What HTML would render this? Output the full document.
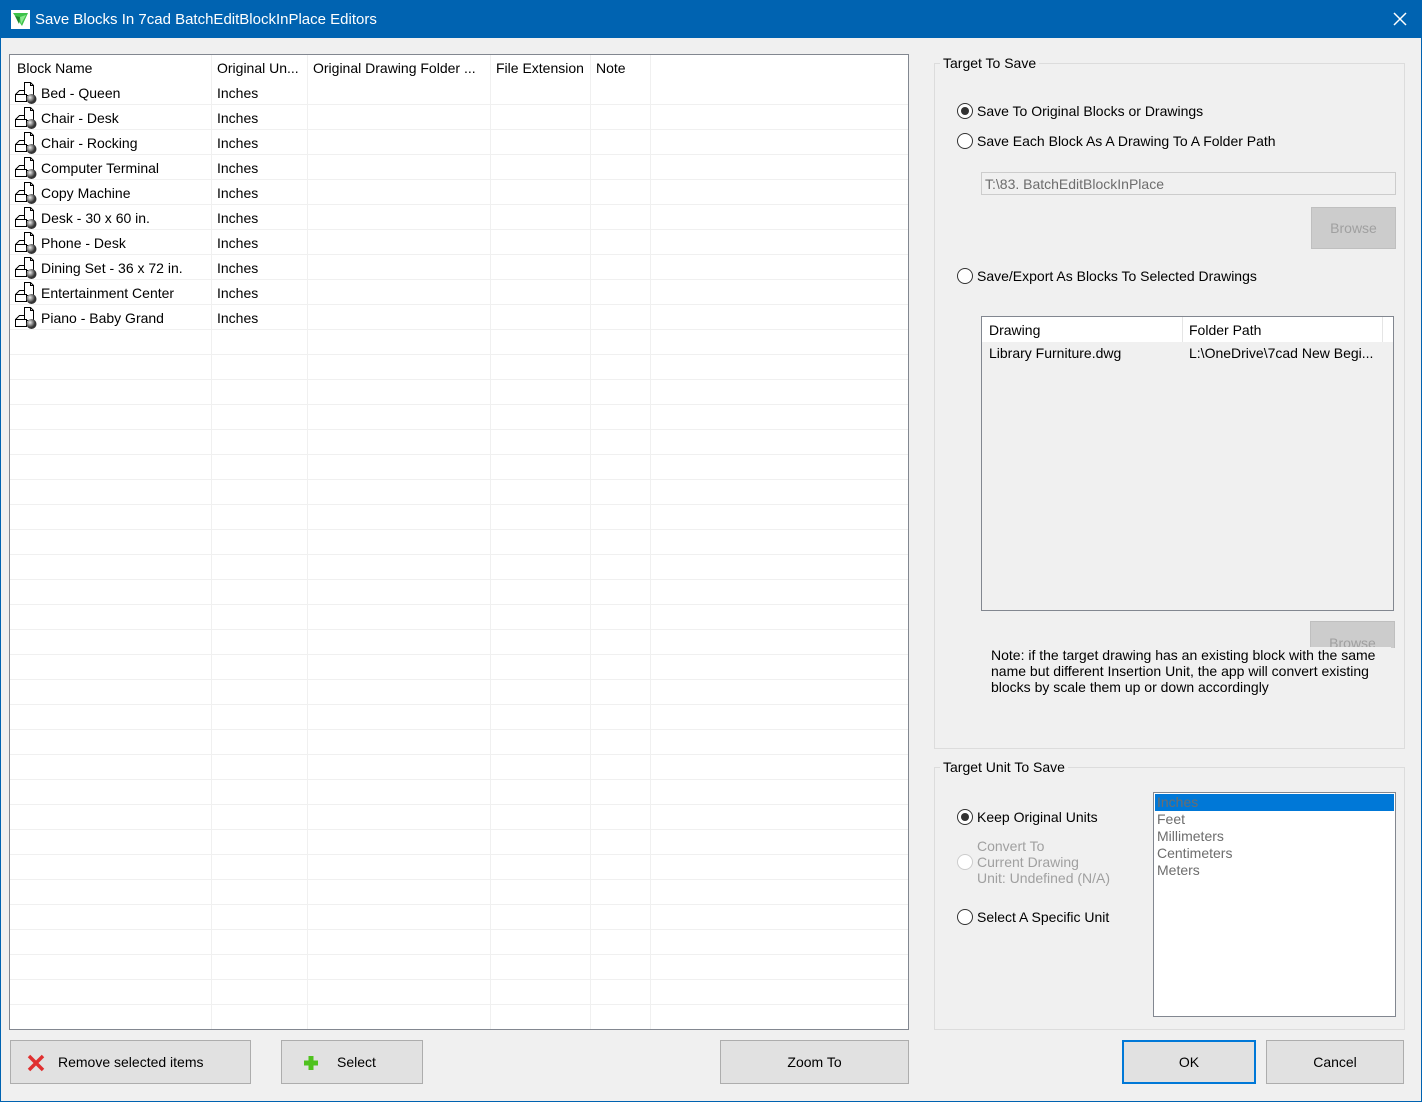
<!DOCTYPE html>
<html><head><meta charset="utf-8"><style>
*{margin:0;padding:0;box-sizing:border-box}
body{width:1422px;height:1102px;background:#f0f0f0;font-family:"Liberation Sans",sans-serif;font-size:14px;color:#000;position:relative;overflow:hidden}
.a{position:absolute;white-space:nowrap}
.win{position:absolute;left:0;top:0;width:1422px;height:1102px;border:1px solid #0063b1;border-top:none}
.title{position:absolute;left:0;top:0;width:1422px;height:38px;background:#0063b1;color:#fff;font-size:15px}
.grid{position:absolute;left:9px;top:54px;width:900px;height:976px;border:1px solid #828790;background:#fff;overflow:hidden}
.rows{position:absolute;left:0;top:25px;width:898px;height:950px;background:repeating-linear-gradient(to bottom,transparent 0,transparent 24px,#f0f0f0 24px,#f0f0f0 25px)}
.vl{position:absolute;top:0;width:1px;height:976px;background:#f0f0f0}
.btn{position:absolute;background:#e1e1e1;border:1px solid #adadad;text-align:center}
.grp{position:absolute;border:1px solid #dcdcdc}
.gl{position:absolute;background:#f0f0f0;padding:0 3px}
.rad{position:absolute;width:16px;height:16px;border:1px solid #333;border-radius:50%;background:#fff}
.rad.on::after{content:"";position:absolute;left:3px;top:3px;width:8px;height:8px;border-radius:50%;background:#333}
.dis{color:#a0a0a0}
.r{position:relative;height:25px}
</style></head><body>
<div class="win"></div>
<div class="title">
<svg class="a" style="left:11px;top:10px" width="19" height="19" viewBox="0 0 19 19"><rect width="19" height="19" fill="#fff"/><path d="M2 3 L17 3 L11 16 Z" fill="#3ec24a"/><path d="M4 6 L9 7 L8 14 Z" fill="#1e8a2e"/><path d="M9 7 L15 5 L10 14Z" fill="#8be88f"/></svg>
<span class="a" style="left:35px;top:11px">Save Blocks In 7cad BatchEditBlockInPlace Editors</span>
<svg class="a" style="left:1393px;top:12px" width="14" height="14"><path d="M1 1L13 13M13 1L1 13" stroke="#fff" stroke-width="1.5"/></svg>
</div>

<svg width="0" height="0" style="position:absolute"><defs><radialGradient id="g" cx="35%" cy="35%"><stop offset="0" stop-color="#eee"/><stop offset="1" stop-color="#333"/></radialGradient>
<symbol id="ic" viewBox="0 0 24 24"><path d="M10.5 1.5h6l3 3v10h-9z M16.5 1.5v3h3" fill="#fff" stroke="#000"/><rect x="1.5" y="13.5" width="11" height="7" fill="#fff" stroke="#000"/><path d="M1.5 13.5l4-4h5" fill="none" stroke="#000"/><circle cx="17.5" cy="18" r="5" fill="url(#g)"/></symbol></defs></svg>

<div class="grid">
<div class="rows"></div>
<div class="vl" style="left:201px"></div><div class="vl" style="left:297px"></div><div class="vl" style="left:480px"></div><div class="vl" style="left:580px"></div><div class="vl" style="left:640px"></div>
<span class="a" style="left:7px;top:5px">Block Name</span>
<span class="a" style="left:207px;top:5px">Original Un...</span>
<span class="a" style="left:303px;top:5px">Original Drawing Folder ...</span>
<span class="a" style="left:486px;top:5px">File Extension</span>
<span class="a" style="left:586px;top:5px">Note</span>
</div>

<div class="a" style="left:14px;top:81px;line-height:25px">
<div class="r"><svg class="a" style="left:0;top:0" width="24" height="24"><use href="#ic"/></svg><span class="a" style="left:27px">Bed - Queen</span><span class="a" style="left:203px">Inches</span></div>
<div class="r"><svg class="a" style="left:0;top:0" width="24" height="24"><use href="#ic"/></svg><span class="a" style="left:27px">Chair - Desk</span><span class="a" style="left:203px">Inches</span></div>
<div class="r"><svg class="a" style="left:0;top:0" width="24" height="24"><use href="#ic"/></svg><span class="a" style="left:27px">Chair - Rocking</span><span class="a" style="left:203px">Inches</span></div>
<div class="r"><svg class="a" style="left:0;top:0" width="24" height="24"><use href="#ic"/></svg><span class="a" style="left:27px">Computer Terminal</span><span class="a" style="left:203px">Inches</span></div>
<div class="r"><svg class="a" style="left:0;top:0" width="24" height="24"><use href="#ic"/></svg><span class="a" style="left:27px">Copy Machine</span><span class="a" style="left:203px">Inches</span></div>
<div class="r"><svg class="a" style="left:0;top:0" width="24" height="24"><use href="#ic"/></svg><span class="a" style="left:27px">Desk - 30 x 60 in.</span><span class="a" style="left:203px">Inches</span></div>
<div class="r"><svg class="a" style="left:0;top:0" width="24" height="24"><use href="#ic"/></svg><span class="a" style="left:27px">Phone - Desk</span><span class="a" style="left:203px">Inches</span></div>
<div class="r"><svg class="a" style="left:0;top:0" width="24" height="24"><use href="#ic"/></svg><span class="a" style="left:27px">Dining Set - 36 x 72 in.</span><span class="a" style="left:203px">Inches</span></div>
<div class="r"><svg class="a" style="left:0;top:0" width="24" height="24"><use href="#ic"/></svg><span class="a" style="left:27px">Entertainment Center</span><span class="a" style="left:203px">Inches</span></div>
<div class="r"><svg class="a" style="left:0;top:0" width="24" height="24"><use href="#ic"/></svg><span class="a" style="left:27px">Piano - Baby Grand</span><span class="a" style="left:203px">Inches</span></div>
</div>

<div class="btn" style="left:10px;top:1040px;width:241px;height:44px"><svg class="a" style="left:16px;top:13px" width="18" height="18"><path d="M2 2L16 16M16 2L2 16" stroke="#e03030" stroke-width="3.5"/></svg><span class="a" style="left:47px;top:13px">Remove selected items</span></div>
<div class="btn" style="left:281px;top:1040px;width:142px;height:44px"><svg class="a" style="left:20px;top:13px" width="18" height="18"><path d="M9 2V16M2 9H16" stroke="#4fc21e" stroke-width="5"/></svg><span class="a" style="left:55px;top:13px">Select</span></div>
<div class="btn" style="left:720px;top:1040px;width:189px;height:44px;line-height:42px">Zoom To</div>
<div class="btn" style="left:1122px;top:1040px;width:134px;height:44px;line-height:40px;border:2px solid #0078d7">OK</div>
<div class="btn" style="left:1266px;top:1040px;width:138px;height:44px;line-height:42px">Cancel</div>

<div class="grp" style="left:934px;top:63px;width:471px;height:686px"></div>
<span class="gl a" style="left:940px;top:55px">Target To Save</span>
<div class="rad on" style="left:957px;top:103px"></div><span class="a" style="left:977px;top:103px">Save To Original Blocks or Drawings</span>
<div class="rad" style="left:957px;top:133px"></div><span class="a" style="left:977px;top:133px">Save Each Block As A Drawing To A Folder Path</span>
<div class="a" style="left:981px;top:172px;width:415px;height:23px;border:1px solid #ccc;background:#f0f0f0;color:#6d6d6d;padding:3px 3px">T:\83. BatchEditBlockInPlace</div>
<div class="btn dis" style="left:1311px;top:207px;width:85px;height:42px;line-height:40px;background:#ccc;border-color:#bfbfbf;color:#a0a0a0">Browse</div>
<div class="rad" style="left:957px;top:268px"></div><span class="a" style="left:977px;top:268px">Save/Export As Blocks To Selected Drawings</span>
<div class="a" style="left:981px;top:316px;width:413px;height:295px;border:1px solid #828790;background:#f0f0f0">
<div class="a" style="left:0;top:0;width:411px;height:25px;background:#fff"></div>
<div class="a" style="left:200px;top:0;width:1px;height:25px;background:#e5e5e5"></div>
<div class="a" style="left:400px;top:0;width:1px;height:25px;background:#e5e5e5"></div>
<span class="a" style="left:7px;top:5px">Drawing</span><span class="a" style="left:207px;top:5px">Folder Path</span>
<span class="a" style="left:7px;top:28px">Library Furniture.dwg</span><span class="a" style="left:207px;top:28px">L:\OneDrive\7cad New Begi...</span>
</div>
<div class="a" style="left:1310px;top:621px;width:85px;height:27px;background:#ccc;border:1px solid #bfbfbf;border-bottom:none;overflow:hidden;color:#a0a0a0;text-align:center;padding-top:13px">Browse</div>
<div class="a" style="left:991px;top:647px;width:400px;background:#f0f0f0;line-height:16px;white-space:normal">Note: if the target drawing has an existing block with the same name but different Insertion Unit, the app will convert existing blocks by scale them up or down accordingly</div>

<div class="grp" style="left:934px;top:767px;width:471px;height:263px"></div>
<span class="gl a" style="left:940px;top:759px">Target Unit To Save</span>
<div class="rad on" style="left:957px;top:809px"></div><span class="a" style="left:977px;top:809px">Keep Original Units</span>
<div class="rad" style="left:957px;top:854px;border-color:#ccc"></div>
<div class="a dis" style="left:977px;top:838px;line-height:16px">Convert To<br>Current Drawing<br>Unit: Undefined (N/A)</div>
<div class="rad" style="left:957px;top:909px"></div><span class="a" style="left:977px;top:909px">Select A Specific Unit</span>
<div class="a" style="left:1153px;top:792px;width:243px;height:225px;border:1px solid #828790;background:#fff;line-height:17px;color:#6d6d6d">
<div style="margin:1px 1px 0;background:#0078d7;color:#6d6d6d;padding-left:2px;height:17px">Inches</div>
<div style="padding-left:3px">Feet</div><div style="padding-left:3px">Millimeters</div><div style="padding-left:3px">Centimeters</div><div style="padding-left:3px">Meters</div>
</div>
</body></html>
